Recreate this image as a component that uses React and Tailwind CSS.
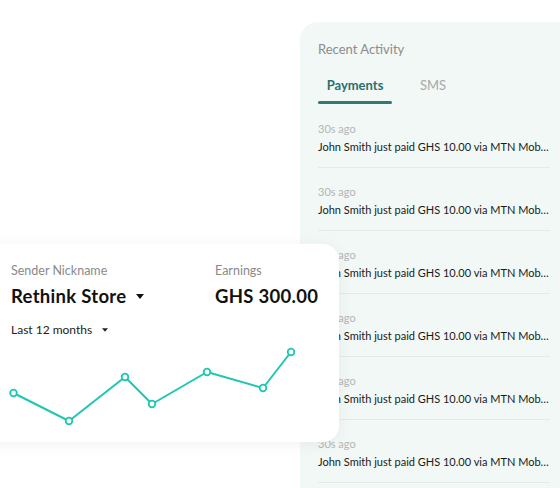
const activity = Array.from({ length: 6 }, (_, i) => ({
  id: i,
  time: '30s ago',
  msg: 'John Smith just paid GHS 10.00 via MTN Mobile Money',
}));

const points = [
  [13.5, 149],
  [69, 177],
  [125, 133],
  [152, 160],
  [207, 128],
  [263, 144],
  [291, 108],
];

function Caret({ className }) {
  return (
    <svg viewBox="0 0 10 6" className={className}>
      <path d="M0 0h10L5 6z" fill="currentColor" />
    </svg>
  );
}

function EarningsCard() {
  return (
    <div className="absolute left-[-24px] top-[244px] h-[198px] w-[363px] rounded-2xl bg-white shadow-[0_2px_16px_rgba(0,0,0,0.06)]">
      <div className="flex pl-[35px] pt-[19px]">
        <div className="w-[204px]">
          <p className="text-[12.5px] leading-4 text-[#8a8a8a]">Sender Nickname</p>
          <div className="mt-[5px] flex items-center gap-[10px]">
            <span className="text-[18.5px] font-bold leading-6 tracking-[0.3px] text-[#111]">Rethink Store</span>
            <Caret className="h-[5px] w-[8px] text-[#111]" />
          </div>
        </div>
        <div>
          <p className="text-[12.5px] leading-4 text-[#8a8a8a]">Earnings</p>
          <p className="mt-[5px] text-[18.5px] font-bold leading-6 tracking-[0.3px] text-[#111]">GHS 300.00</p>
        </div>
      </div>
      <div className="mt-[14px] flex items-center gap-[10px] pl-[35px]">
        <span className="text-[12px] leading-4 text-[#222]">Last 12 months</span>
        <Caret className="h-[4px] w-[6px] text-[#222]" />
      </div>
      <svg className="absolute left-[24px] top-0" width="320" height="198">
        <polyline
          points={points.map((p) => p.join(',')).join(' ')}
          fill="none"
          stroke="#1fc7b0"
          strokeWidth="2"
          strokeLinejoin="round"
        />
        {points.map(([x, y]) => (
          <circle key={x} cx={x} cy={y} r="3.3" fill="#fff" stroke="#1fc7b0" strokeWidth="1.8" />
        ))}
      </svg>
    </div>
  );
}

export default function App() {
  return (
    <div
      className="relative h-[488px] w-[560px] overflow-hidden bg-white"
      style={{ fontFamily: 'Lato, "Noto Sans", sans-serif' }}
    >
      <div className="ml-[300px] mt-[22px] h-[520px] w-[300px] rounded-tl-[18px] bg-[#f1f8f6] pl-[18px] pt-[19px]">
        <p className="text-[13px] leading-4 text-[#8c8c8c]">Recent Activity</p>
        <div className="mt-[20px] flex items-end gap-[28px]">
          <div className="flex w-[74px] flex-col items-center">
            <span className="text-[13px] font-bold leading-4 text-[#2f6f6b]">Payments</span>
            <span className="mt-[8px] h-[3px] w-full rounded-full bg-[#2f7a75]" />
          </div>
          <span className="pb-[11px] text-[13px] leading-4 text-[#a8a8a8]">SMS</span>
        </div>
        <div className="mt-[1px] w-[232px]">
          {activity.map((a) => (
            <div key={a.id} className="border-b border-[#e3ebe9] pb-[13px] pt-[17px]">
              <p className="text-[11px] leading-[14px] text-[#b5b5b5]">{a.time}</p>
              <p className="mt-[4px] truncate text-[11px] leading-[14px] text-[#1a1a1a]">{a.msg}</p>
            </div>
          ))}
        </div>
      </div>
      <EarningsCard />
    </div>
  );
}
